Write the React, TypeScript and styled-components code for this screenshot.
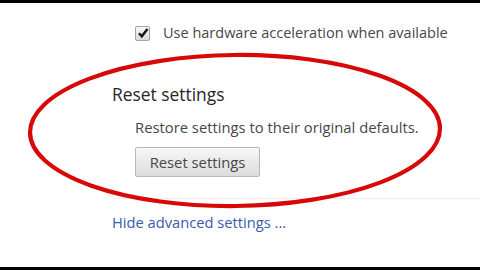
import React from "react";
import styled, { createGlobalStyle } from "styled-components";

const Global = createGlobalStyle`
  html, body { margin: 0; padding: 0; background: #fff; }
  body { width: 480px; height: 270px; overflow: hidden; font-family: "Open Sans", "Noto Sans", sans-serif; }
`;

const Page = styled.div`
  position: relative;
  width: 480px;
  height: 270px;
  display: flex;
  flex-direction: column;
  background: #fff;
`;

const BlackBar = styled.div<{ $h: number }>`
  height: ${(p) => p.$h}px;
  background: #000;
  flex: none;
`;

const Content = styled.div`
  flex: 1;
  display: flex;
  flex-direction: column;
  padding-left: 112px;
`;

const CheckRow = styled.label`
  display: flex;
  align-items: center;
  gap: 13px;
  margin-top: 22px;
  margin-left: 23px;
  color: #474747;
  font-size: 14.5px;
  line-height: 16px;
  height: 16px;
`;

const Box = styled.span`
  box-sizing: border-box;
  width: 15px;
  height: 15px;
  border: 1px solid #a4a4a4;
  border-radius: 2px;
  background: linear-gradient(#f6f6f6, #dadada);
  display: flex;
  align-items: center;
  justify-content: center;
`;

const Heading = styled.h2`
  margin: 43px 0 0 0;
  font-size: 17.4px;
  font-weight: 400;
  color: #262626;
  line-height: 20px;
`;

const Desc = styled.p`
  margin: 14px 0 0 23px;
  font-size: 14.8px;
  color: #474747;
  line-height: 18px;
`;

const Button = styled.button`
  box-sizing: border-box;
  margin: 11px 0 0 23px;
  width: 125px;
  height: 30px;
  align-self: flex-start;
  border: 1px solid #b8b8b8;
  border-radius: 2px;
  background: linear-gradient(#f7f7f7, #dcdcdc);
  font-family: inherit;
  font-size: 14.8px;
  color: #474747;
  padding: 0;
`;

const Separator = styled.div`
  margin-top: 21px;
  height: 1px;
  background: #efefef;
`;

const Link = styled.a`
  margin-top: 14px;
  font-size: 14.7px;
  color: #3a5ba8;
  text-decoration: none;
  line-height: 18px;
`;

const Ellipse = styled.svg`
  position: absolute;
  left: 0;
  top: 0;
  pointer-events: none;
`;

export default function App() {
  return (
    <>
      <Global />
      <Page>
        <BlackBar $h={3} />
        <Content>
          <CheckRow>
            <Box>
              <svg width="12" height="12" viewBox="0 0 12 12">
                <path d="M2 6.3 L4.8 9.3 L10.5 2" fill="none" stroke="#111" strokeWidth="2.4" />
              </svg>
            </Box>
            Use hardware acceleration when available
          </CheckRow>
          <Heading>Reset settings</Heading>
          <Desc>Restore settings to their original defaults.</Desc>
          <Button>Reset settings</Button>
          <Separator />
          <Link>Hide advanced settings ...</Link>
        </Content>
        <BlackBar $h={3} />
        <Ellipse width="480" height="270" viewBox="0 0 480 270">
          <ellipse cx="235" cy="130.5" rx="205" ry="75.5" fill="none" stroke="#d70808" strokeWidth="4.2" transform="rotate(-0.6 235 130)" />
        </Ellipse>
      </Page>
    </>
  );
}
